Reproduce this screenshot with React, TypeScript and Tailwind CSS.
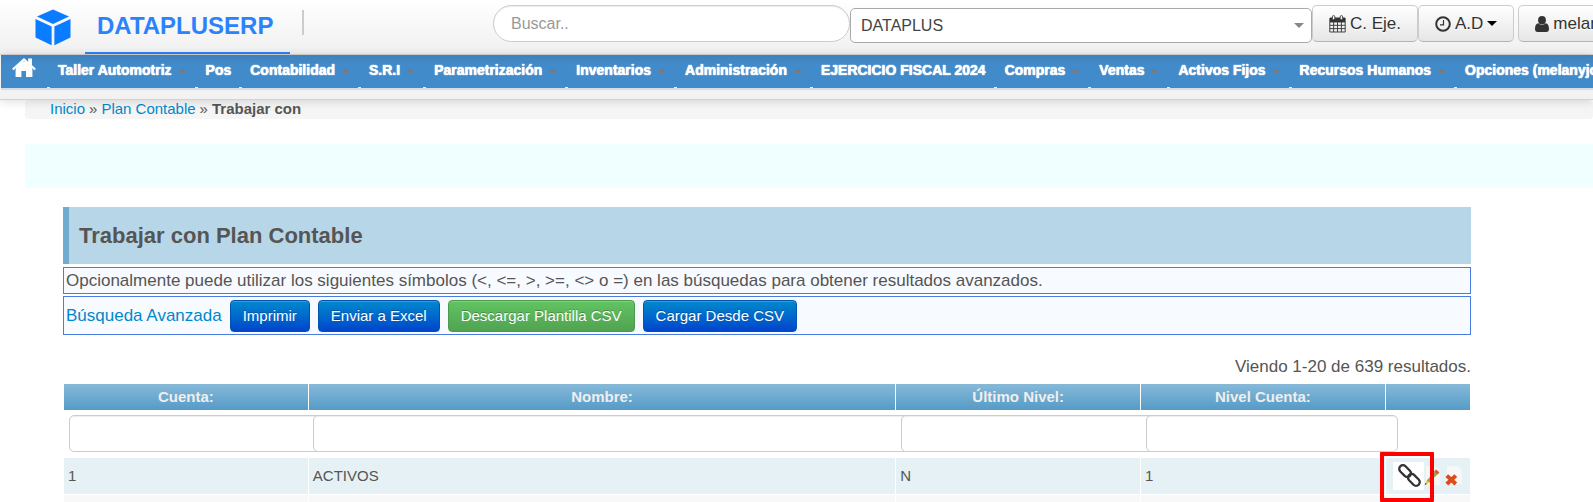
import { useState } from "react";
import clsx from "clsx";

const menu = [
  { label: "Taller Automotriz", sub: true },
  { label: "Pos", sub: false },
  { label: "Contabilidad", sub: true },
  { label: "S.R.I", sub: true },
  { label: "Parametrización", sub: true },
  { label: "Inventarios", sub: true },
  { label: "Administración", sub: true },
  { label: "EJERCICIO FISCAL 2024", sub: false },
  { label: "Compras", sub: true },
  { label: "Ventas", sub: true },
  { label: "Activos Fijos", sub: true },
  { label: "Recursos Humanos", sub: true },
  { label: "Opciones (melanyjo)", sub: true },
];

const actions = [
  { label: "Imprimir", green: false },
  { label: "Enviar a Excel", green: false },
  { label: "Descargar Plantilla CSV", green: true },
  { label: "Cargar Desde CSV", green: false },
];

const columns = [
  { label: "Cuenta:", width: "w-[17.4%]" },
  { label: "Nombre:", width: "w-[41.75%]" },
  { label: "Último Nivel:", width: "w-[17.4%]" },
  { label: "Nivel Cuenta:", width: "w-[17.4%]" },
];

const rows = [["1", "ACTIVOS", "N", "1"]];

const toolButton =
  "flex h-[37px] shrink-0 items-center gap-1 rounded-[5px] border border-[#ccc] border-b-[#b3b3b3] bg-linear-to-b from-white to-[#e6e6e6] px-4 text-[17px] text-[#333] [text-shadow:0_1px_1px_rgba(255,255,255,0.75)]";

function LogoIcon() {
  return (
    <svg viewBox="0 0 36 37" className="h-[37px] w-9 shrink-0" aria-hidden="true">
      <g fill="#0a7cff">
        <path d="M18 0.5 34 7.6 18 15 2 7.6Z" />
        <path d="M0.5 10 16.6 17.4V36.3L0.5 28.6Z" />
        <path d="M35.5 10 19.4 17.4V36.3L35.5 28.6Z" />
      </g>
    </svg>
  );
}

function HomeIcon() {
  return (
    <svg viewBox="0 0 24 20" className="h-5 w-6" aria-hidden="true">
      <g fill="#fff">
        <path d="M12 0 0 10.8 1.6 12.2 12 3.2 22.4 12.2 24 10.8 20 7.2V0.6H16.2V3.8Z" />
        <path d="M12 4.2 3.6 11.6V19H9.4V13H14V19H20.4V11.6Z" />
        <path d="M9 4 15 4 20 9V12H4V9Z" />
      </g>
    </svg>
  );
}

function CalendarIcon() {
  return (
    <svg viewBox="0 0 17 18" className="h-[18px] w-[17px]" aria-hidden="true">
      <path d="M1 2.5H16V7H1Z" fill="#333" />
      <path
        d="M0.8 3V17H16.2V3M0.8 7H16.2M0.8 10.3H16.2M0.8 13.6H16.2M4.6 7V17M8.5 7V17M12.4 7V17"
        fill="none"
        stroke="#333"
        strokeWidth="0.9"
      />
      <rect x="3.4" y="0.6" width="2.4" height="4.2" rx="1.2" fill="#fff" stroke="#333" strokeWidth="0.9" />
      <rect x="11.2" y="0.6" width="2.4" height="4.2" rx="1.2" fill="#fff" stroke="#333" strokeWidth="0.9" />
    </svg>
  );
}

function ClockIcon() {
  return (
    <svg viewBox="0 0 16 16" className="size-4" fill="none" stroke="#333" aria-hidden="true">
      <circle cx="8" cy="8" r="6.8" strokeWidth="2" />
      <path d="M8.5 4V8.8H5" strokeWidth="1.2" />
    </svg>
  );
}

function UserIcon() {
  return (
    <svg viewBox="0 0 14 16" className="h-4 w-3.5" fill="#333" aria-hidden="true">
      <ellipse cx="7" cy="4.2" rx="3.9" ry="4.2" />
      <path d="M3.4 7.3C1 7.6 0 9.8 0 13 0 14.8 1 16 2.6 16H11.4C13 16 14 14.8 14 13 14 9.8 13 7.6 10.6 7.3 8.6 9.4 5.4 9.4 3.4 7.3Z" />
    </svg>
  );
}

function Caret({ className }: { className: string }) {
  return (
    <svg viewBox="0 0 10 5" className={clsx("h-[5px] shrink-0", className)} fill="currentColor" aria-hidden="true">
      <path d="M0 0H10L5 5Z" />
    </svg>
  );
}

function LinkIcon() {
  return (
    <svg viewBox="0 0 31 28" className="h-7 w-[31px] bg-white" fill="none" aria-hidden="true">
      <g transform="translate(16.5 13.5) rotate(45)" stroke="#333" strokeWidth="2.3">
        <rect x="-13" y="-3.7" width="13.6" height="7.4" rx="3.7" />
        <rect x="-0.6" y="-3.7" width="13.6" height="7.4" rx="3.7" />
      </g>
    </svg>
  );
}

function EditIcon() {
  return (
    <svg viewBox="0 0 17 20" className="h-5 w-[17px]" aria-hidden="true">
      <path d="M2 0H12L16 4V19H2Z" fill="#f6f6f4" />
      <path d="M2.6 14.5 11 5.6 13.6 8 5.4 16.8Z" fill="#8dac4a" />
      <path d="M2.6 14.5 5.4 16.8 0.8 19Z" fill="#f0c34c" />
      <path d="M0.8 19 1.5 17 2.8 18Z" fill="#333" />
      <path d="M10 5.6 12.2 3.6 15.4 6.6 13.6 8.6Z" fill="#e4572d" />
    </svg>
  );
}

function DeleteIcon() {
  return (
    <svg viewBox="0 0 18 20" className="h-5 w-[18px]" aria-hidden="true">
      <path d="M2 0H13L17 4V18H2Z" fill="#f6f7f8" />
      <path d="M1.8 9.6 10.8 18M10.8 9.6 1.8 18" stroke="#dd4a1c" strokeWidth="4" />
    </svg>
  );
}

function TopBar() {
  return (
    <div className="flex h-[55px] items-start overflow-hidden border-b border-[#d4d4d4] bg-linear-to-b from-white to-[#f0f0f0] pl-[35px] whitespace-nowrap">
      <div className="flex w-[458px] shrink-0 items-start">
        <div className="pt-[9px] pr-3.5">
          <LogoIcon />
        </div>
        <a href="#" className="flex h-[54px] items-center border-b-2 border-[#2b83fb] pr-[17px] pl-3 text-2xl font-bold text-[#2b83fb]">
          DATAPLUSERP
        </a>
        <span className="mt-2.5 ml-3 h-[25px] w-0.5 bg-[#ccc]" />
      </div>
      <div className="flex min-w-0 flex-1 items-start pt-[5px]">
        <input
          type="search"
          aria-label="Buscar"
          placeholder="Buscar.."
          className="h-[37px] w-[357px] shrink-0 rounded-full border border-[#ccc] bg-white px-[17px] text-base shadow-[inset_0_1px_1px_rgba(0,0,0,0.075)] outline-none placeholder:text-[#999]"
        />
        <div className="relative mt-[3px] w-[29vw] shrink-0">
          <select
            aria-label="Empresa"
            className="h-[35px] w-full appearance-none rounded-[5px] border border-[#aaa] bg-white px-2.5 text-base text-[#444]"
          >
            <option>DATAPLUS</option>
          </select>
          <Caret className="pointer-events-none absolute top-[15px] right-2 w-2.5 text-[#888]" />
        </div>
        <button type="button" className={toolButton}>
          <CalendarIcon />
          C. Eje.
        </button>
        <button type="button" className={toolButton}>
          <ClockIcon />
          A.D
          <Caret className="w-2.5 text-black" />
        </button>
        <button type="button" className={clsx(toolButton, "ml-1")}>
          <UserIcon />
          melanyjo
        </button>
      </div>
    </div>
  );
}

function MainMenu() {
  return (
    <nav
      aria-label="Principal"
      className="relative border-b border-[#d0d3d3] bg-[#f2f2f2] pb-[9px] pl-px shadow-[0_1px_10px_rgba(0,0,0,0.15)]"
    >
      <div className="flex h-[35px] overflow-hidden border-b-2 border-[#d5dde4] bg-linear-to-b from-[#3f80bd] to-[#428bca] to-30% whitespace-nowrap">
        <a href="#" aria-label="Inicio" className="flex w-[46px] shrink-0 items-start pt-[3px] pl-[11px]">
          <HomeIcon />
        </a>
        {menu.map((item) => (
          <a
            key={item.label}
            href="#"
            className="flex shrink-0 items-start text-sm leading-[30px] font-bold text-white [text-shadow:0_0_1px_#fff,0_0_1px_#fff]"
          >
            <span className="mt-8 h-px w-[3px] bg-[#e5edf4]" />
            <span className={clsx("pl-2", item.sub ? "pr-1.5" : "pr-2")}>{item.label}</span>
            {item.sub && <Caret className="mt-3.5 mr-2 w-[9px] text-[#7d7878]" />}
          </a>
        ))}
      </div>
    </nav>
  );
}

function AccountsTable() {
  const [filters, setFilters] = useState(["", "", "", ""]);

  return (
    <table className="w-full table-fixed border-collapse text-[15px]">
      <thead>
        <tr className="h-[27px] bg-linear-to-b from-[#86b9d8] to-[#529ac7]">
          {columns.map((column) => (
            <th key={column.label} className={clsx("border border-white p-0 leading-5 font-bold text-[#eee]", column.width)}>
              {column.label}
            </th>
          ))}
          <th className="border border-white p-0" aria-label="Acciones" />
        </tr>
        <tr className="h-[47px]">
          {columns.map((column, i) => (
            <td key={column.label} className="p-0 pt-1 pb-[5px] pl-[5px] align-top">
              <input
                type="text"
                aria-label={`Filtrar ${column.label}`}
                value={filters[i]}
                onChange={(e) => setFilters(filters.map((value, n) => (n === i ? e.target.value : value)))}
                className="relative block h-[37px] w-[calc(100%+13px)] rounded-[5px] border border-[#ccc] bg-white px-1.5 shadow-[inset_0_1px_1px_rgba(0,0,0,0.075)]"
              />
            </td>
          ))}
          <td />
        </tr>
      </thead>
      <tbody>
        {rows.map((row) => (
          <tr key={row[0]} className="h-[37px] bg-[#e5f1f4]">
            {row.map((cell, i) => (
              <td key={i} className="border border-white px-1 py-0">
                {cell}
              </td>
            ))}
            <td className="relative border border-white p-0">
              <div className="flex items-center pl-[7px]">
                <a href="#" aria-label="Enlazar">
                  <LinkIcon />
                </a>
                <a href="#" aria-label="Editar">
                  <EditIcon />
                </a>
                <a href="#" aria-label="Borrar" className="ml-1">
                  <DeleteIcon />
                </a>
              </div>
              <span className="pointer-events-none absolute -top-1.5 -left-1.5 h-[50px] w-[54px] rounded-[1px] border-4 border-[#fe0000]" />
            </td>
          </tr>
        ))}
        <tr className="h-2 bg-[#f8f8f8]">
          {["a", "b", "c", "d", "e"].map((key) => (
            <td key={key} className="border-x border-white p-0" />
          ))}
        </tr>
      </tbody>
    </table>
  );
}

export default function App() {
  return (
    <div className="overflow-hidden bg-white font-['Liberation_Sans',Arial,sans-serif] text-[#555]">
      <header className="relative z-10">
        <TopBar />
        <MainMenu />
      </header>

      <div className="ml-[25px]">
        <nav aria-label="Ruta" className="flex h-[19px] items-center gap-1 rounded bg-[#f5f5f5] pl-[25px] text-[15px]">
          <a href="#" className="text-[#0088cc]">Inicio</a>
          <span>»</span>
          <a href="#" className="text-[#0088cc]">Plan Contable</a>
          <span>»</span>
          <span className="font-bold">Trabajar con</span>
        </nav>
        <div className="mt-[25px] h-11 bg-[#f0ffff]" />
      </div>

      <main className="mt-[19px] mr-[122px] ml-[63px]">
        <h1 className="border-l-6 border-[#6faccf] bg-[#b7d6e7] py-3.5 pl-2.5 text-[22px] leading-[29px] font-bold">
          Trabajar con Plan Contable
        </h1>
        <p className="mt-[3px] border border-[#4a7be0] bg-[#f7faff] px-0.5 text-[17px] leading-[25px]">
          Opcionalmente puede utilizar los siguientes símbolos (&lt;, &lt;=, &gt;, &gt;=, &lt;&gt; o =) en las búsquedas para
          obtener resultados avanzados.
        </p>
        <div className="mt-0.5 flex items-center gap-2 border border-[#4a7be0] bg-[#f7faff] px-0.5 pt-[3px] pb-0.5">
          <a href="#" className="text-[17px] text-[#0088cc]">Búsqueda Avanzada</a>
          {actions.map((action) => (
            <button
              key={action.label}
              type="button"
              className={clsx(
                "h-8 rounded border px-3 text-[15px] text-white shadow-[inset_0_1px_0_rgba(255,255,255,0.2)] [text-shadow:0_-1px_0_rgba(0,0,0,0.25)]",
                action.green
                  ? "border-[#4c9a4c] bg-linear-to-b from-[#62c462] to-[#51a351]"
                  : "border-[#0055b3] bg-linear-to-b from-[#0088cc] to-[#0044cc]"
              )}
            >
              {action.label}
            </button>
          ))}
        </div>
        <p className="mt-5 mb-1 text-right text-[17px] leading-6">Viendo 1-20 de 639 resultados.</p>
        <AccountsTable />
      </main>
    </div>
  );
}
